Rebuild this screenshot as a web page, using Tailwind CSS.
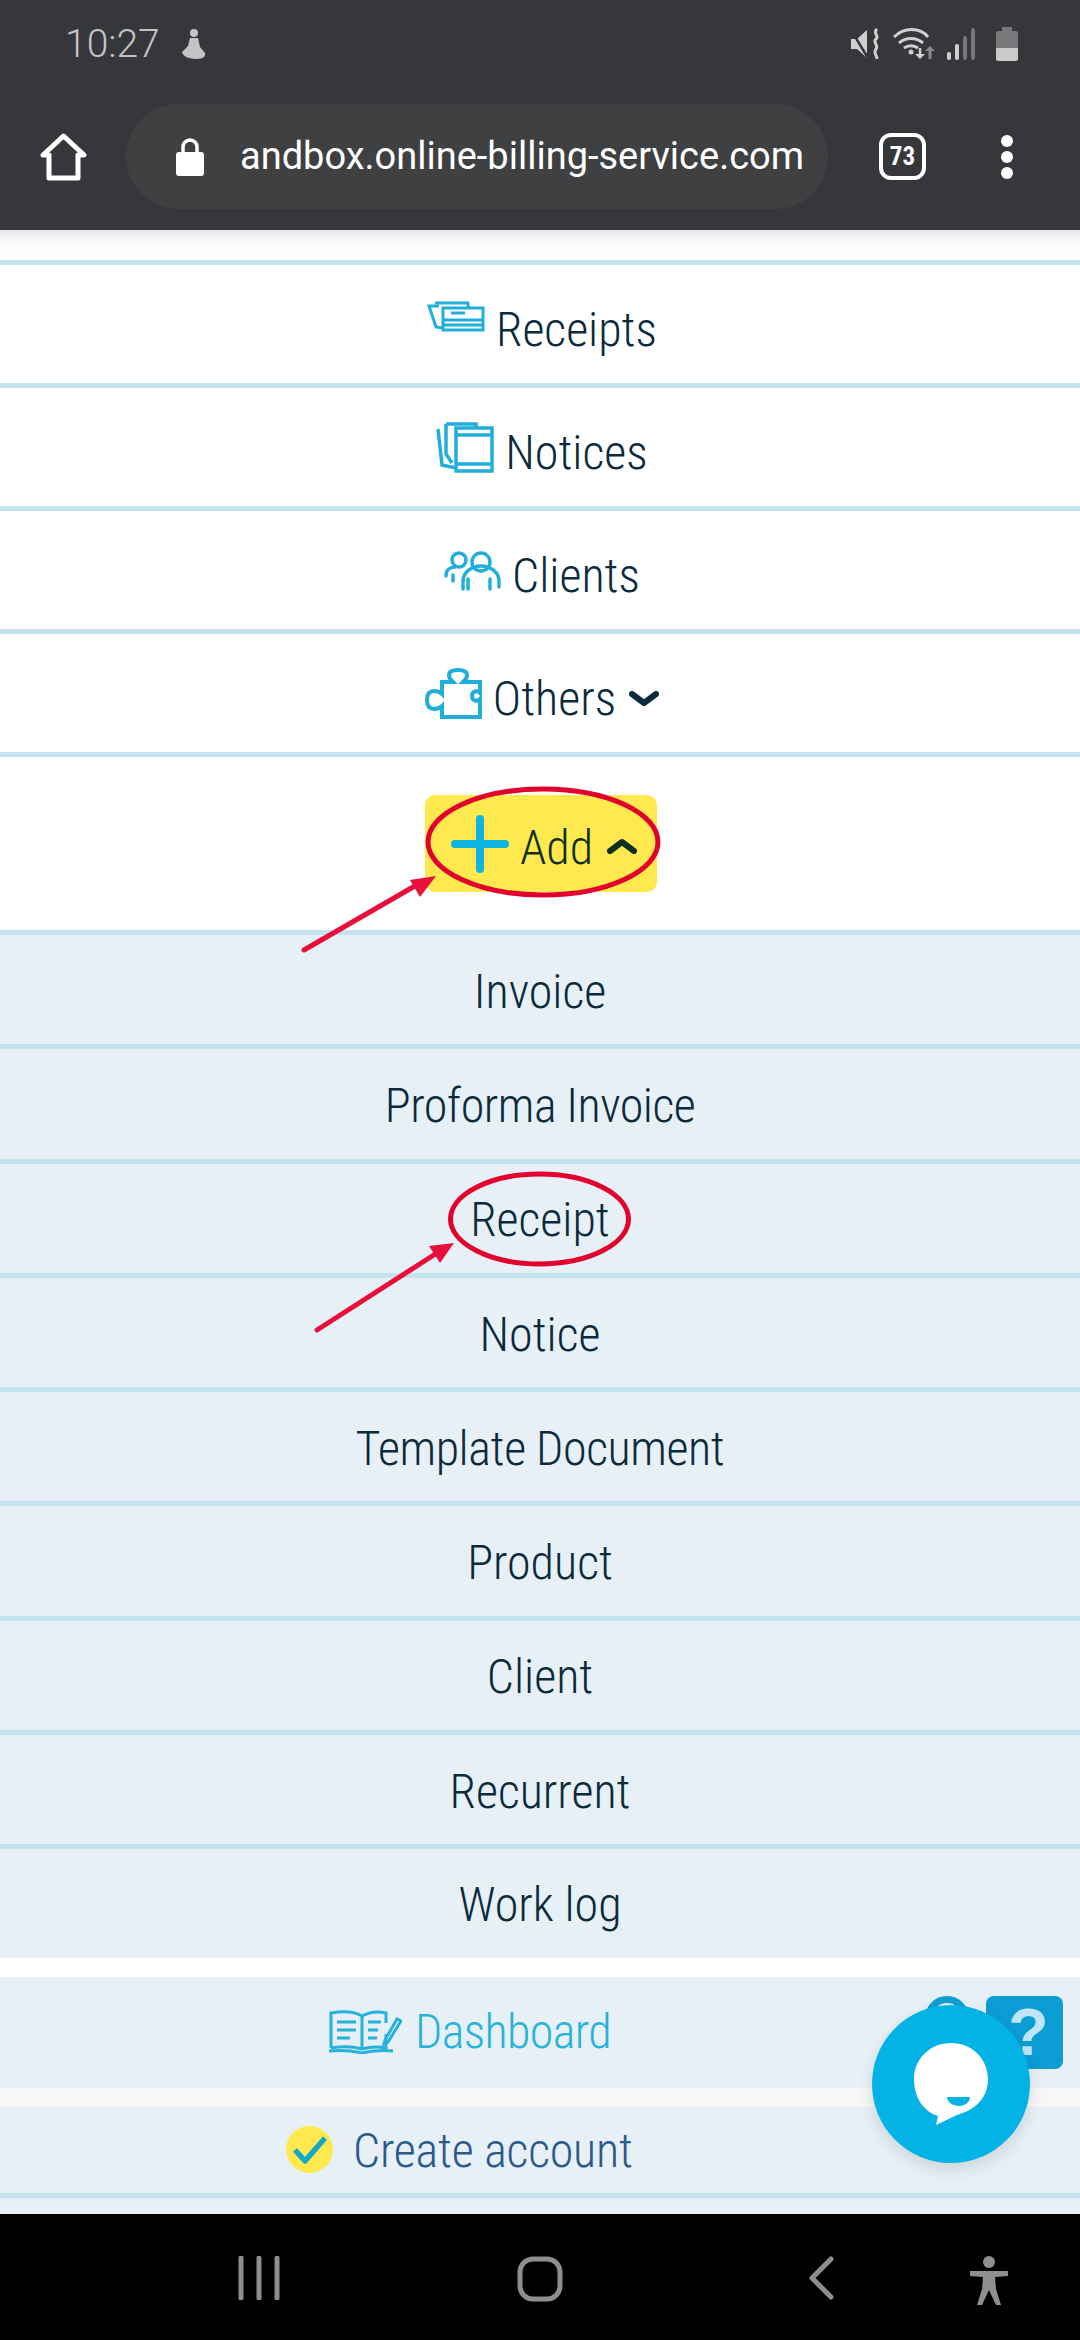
<!DOCTYPE html>
<html lang="en">
<head>
  <meta charset="UTF-8" />
  <meta name="viewport" content="width=device-width, initial-scale=1.0" />
  <title>Menu</title>
  <script src="https://cdn.jsdelivr.net/npm/@tailwindcss/browser@4"></script>
</head>
<body class="bg-white font-['Roboto',sans-serif]">
  <div class="relative w-[1080px] h-[2340px] overflow-hidden flex flex-col font-['Roboto',sans-serif] font-light [font-stretch:75%] text-[48px] text-[#0b2a3b]">

    <!-- Status bar + browser toolbar -->
    <header class="h-[230px] shrink-0 bg-[#36373a] flex flex-col font-normal [font-stretch:100%]">
      <div class="h-[88px] pl-[65px] pr-[62px] flex items-center justify-between">
        <div class="flex items-center gap-[19px] text-[#c4c4c4] text-[39px] font-light [font-stretch:88%]">
          <span>10:27</span>
          <svg width="28" height="32" viewBox="0 0 28 32" fill="#c4c4c4"><circle cx="15" cy="5" r="4"/><path d="M11 10h8l2 9 5 6c1 3-2 6-8 6-7 0-14-2-15-7l6-6z"/></svg>
        </div>
        <div class="flex items-center">
          <svg width="32" height="32" viewBox="0 0 32 32" fill="none"><path d="M1 11h6L17 2v28L7 21H1z" fill="#cfcfcf"/><path d="M1 2l17 28" stroke="#36373a" stroke-width="2.5"/><path d="M27 1c-5 4 3 7-1 10s3 6 0 10 1 6 1 10" stroke="#cfcfcf" stroke-width="3"/></svg>
          <svg width="42" height="32" viewBox="0 0 42 32" fill="none" stroke="#cfcfcf" stroke-width="3" class="ml-[11px]"><path d="M1 9c10-10 26-10 34 0M6 15c7-6 17-6 24 0M11 20c4-3 10-3 14 0"/><circle cx="18" cy="24" r="2.5" fill="#cfcfcf" stroke="none"/><path d="M27 20v8" stroke-width="2.5"/><path d="M22 26l5 5 5-5z" fill="#cfcfcf" stroke="none"/><path d="M37 31V21" stroke="#8a8a8a" stroke-width="3"/><path d="M32 23l5-5 5 5z" fill="#8a8a8a" stroke="none"/></svg>
          <svg width="28" height="32" viewBox="0 0 28 32" fill="none" stroke-width="4" stroke-linecap="round" class="ml-[12px]"><path d="M2 30v-4" stroke="#cfcfcf"/><path d="M10 30V18" stroke="#cfcfcf"/><path d="M18 30V10" stroke="#77787a"/><path d="M26 30V2" stroke="#77787a"/></svg>
          <svg width="22" height="34" viewBox="0 0 22 34" class="ml-[21px]"><path d="M6 0h10v4h4a2 2 0 012 2v15H0V6a2 2 0 012-2h4z" fill="#77787a"/><path d="M0 21h22v11a2 2 0 01-2 2H2a2 2 0 01-2-2z" fill="#cacaca"/></svg>
        </div>
      </div>
      <div class="flex items-center pt-[16px] pl-[40px]">
        <svg width="47" height="48" viewBox="0 0 47 48" fill="none" stroke="#fff" stroke-width="5" stroke-linejoin="round"><path d="M3 22L23.5 3 44 22h-6v23H9V22z"/></svg>
        <div class="ml-[39px] w-[702px] h-[105px] rounded-full bg-[#3e4042] flex items-center pl-[49px]">
          <svg width="30" height="38" viewBox="0 0 30 38" fill="none"><path d="M8 16V9a7 7 0 0114 0v7" stroke="#fff" stroke-width="3.5"/><rect x="1" y="14" width="28" height="24" rx="3" fill="#fff"/></svg>
          <span class="ml-[35px] text-[38px] text-white">andbox.online-billing-service.com</span>
        </div>
        <div class="ml-[51px] w-[47px] h-[47px] rounded-[12px] border-[4px] border-white flex items-center justify-center text-white text-[25px] font-bold [font-stretch:75%]">73</div>
        <div class="ml-[75px] flex flex-col gap-[4px]">
          <span class="block w-[12px] h-[12px] rounded-full bg-white"></span>
          <span class="block w-[12px] h-[12px] rounded-full bg-white"></span>
          <span class="block w-[12px] h-[12px] rounded-full bg-white"></span>
        </div>
      </div>
    </header>

    <!-- Page -->
    <main class="flex-1 flex flex-col">
      <div class="h-[30px] shrink-0 bg-gradient-to-b from-[#e8e8e8] via-[#fbfbfb] to-white"></div>
      <div class="h-[5px] shrink-0 bg-[#c5e3ef]"></div>

      <a class="h-[123px] shrink-0 border-b-[5px] border-[#c5e3ef] flex items-center justify-center pl-[4px]">
        <svg width="58" height="32" viewBox="0 0 58 32" fill="none" stroke="#22aedb" stroke-width="3" class="mr-[11px] mb-[16px]"><path d="M16 28L9 27 2 6h10"/><path d="M8 3h33v5"/><rect x="16" y="8" width="40" height="22"/><path d="M16 20h40M16 25h40M24 13h14"/></svg>
        <span class="pt-[12px]">Receipts</span>
      </a>
      <a class="h-[123px] shrink-0 border-b-[5px] border-[#c5e3ef] flex items-center justify-center pl-[4px]">
        <svg width="58" height="52" viewBox="0 0 58 52" fill="none" stroke="#22aedb" stroke-width="3.5" class="mr-[11px]"><path d="M2 8l4 36 14 3"/><path d="M10 3v30l6 9"/><path d="M10 3h30v4"/><rect x="20" y="7" width="36" height="43"/><path d="M20 14h36M20 43h36"/></svg>
        <span class="pt-[12px]">Notices</span>
      </a>
      <a class="h-[123px] shrink-0 border-b-[5px] border-[#c5e3ef] flex items-center justify-center pl-[4px]">
        <svg width="57" height="40" viewBox="0 0 57 40" fill="none" stroke="#22aedb" stroke-width="3.5" stroke-linecap="round" class="mr-[11px] mt-[2px]"><circle cx="15" cy="9" r="7"/><circle cx="37" cy="11" r="9"/><path d="M2 25c0-6 4-9 9-9M9 24v6M19 30a18 15 0 0136 0v6M24 28v10M46 28v10M19 30v8"/></svg>
        <span class="pt-[12px]">Clients</span>
      </a>
      <a class="h-[123px] shrink-0 border-b-[5px] border-[#c5e3ef] flex items-center justify-center pl-[4px]">
        <svg width="57" height="52" viewBox="0 0 57 52" fill="none" stroke="#22aedb" stroke-width="4" class="mr-[11px] mt-[2px]"><path d="M17 14h11c-3-3-4-4-4-7 0-3 3-5 9-5s9 2 9 5c0 3-1 4-4 7h17v11c-3-3-8-2-8 3s5 6 8 3v18H17V38c-2 2-4 3-8 3-5 0-7-4-7-9s2-9 7-9c4 0 6 1 8 3z"/></svg>
        <span class="pt-[12px]">Others</span>
        <svg width="30" height="16" viewBox="0 0 30 16" fill="none" stroke="#0b2a3b" stroke-width="6" stroke-linecap="round" stroke-linejoin="round" class="ml-[13px] mt-[12px]"><path d="M3 3l12 9 12-9"/></svg>
      </a>

      <div class="h-[178px] shrink-0 border-b-[5px] border-[#c5e3ef] flex items-start justify-center pt-[38px] pl-[2px]">
        <a class="w-[232px] h-[97px] rounded-[10px] bg-[#ffe94f] flex items-center pl-[26px] text-[#10301f]">
          <svg width="58" height="58" viewBox="0 0 58 58" fill="none" stroke="#0fb3e0" stroke-width="8" stroke-linecap="round"><path d="M29 4v50M4 29h50"/></svg>
          <span class="ml-[11px] pt-[9px]">Add</span>
          <svg width="30" height="16" viewBox="0 0 30 16" fill="none" stroke="#10301f" stroke-width="6" stroke-linecap="round" stroke-linejoin="round" class="ml-[14px] mt-[4px]"><path d="M3 13l12-9 12 9"/></svg>
        </a>
      </div>

      <!-- Add submenu -->
      <ul class="bg-[#e6f0f6]">
        <li class="h-[114.3px] border-b-[5px] border-[#c5e3ef] flex items-center justify-center pt-[4px]">Invoice</li>
        <li class="h-[114.3px] border-b-[5px] border-[#c5e3ef] flex items-center justify-center pt-[4px] tracking-[-0.5px]">Proforma Invoice</li>
        <li class="h-[114.3px] border-b-[5px] border-[#c5e3ef] flex items-center justify-center pt-[4px]">Receipt</li>
        <li class="h-[114.3px] border-b-[5px] border-[#c5e3ef] flex items-center justify-center pt-[4px]">Notice</li>
        <li class="h-[114.3px] border-b-[5px] border-[#c5e3ef] flex items-center justify-center pt-[4px] tracking-[-0.4px]">Template Document</li>
        <li class="h-[114.3px] border-b-[5px] border-[#c5e3ef] flex items-center justify-center pt-[4px]">Product</li>
        <li class="h-[114.3px] border-b-[5px] border-[#c5e3ef] flex items-center justify-center pt-[4px]">Client</li>
        <li class="h-[114.3px] border-b-[5px] border-[#c5e3ef] flex items-center justify-center pt-[4px]">Recurrent</li>
        <li class="h-[108.6px] flex items-center justify-center pt-[2px]">Work log</li>
      </ul>

      <div class="h-[19px] shrink-0 bg-white"></div>
      <a class="h-[111px] shrink-0 bg-[#e6f0f6] flex items-center pl-[328px] text-[#27b2dc]">
        <svg width="74" height="44" viewBox="0 0 74 44" fill="none" stroke="#27b2dc" stroke-width="3"><path d="M3 38V3c12-2 24-1 31 3 7-4 16-5 24-3v10"/><path d="M34 6v33M3 38c12-2 24-1 31 1 7-2 14-3 24-1V24"/><path d="M1 41c12-1 24 0 33 2 9-2 20-3 31-2"/><path d="M9 12h19M9 20h19M9 28h13M40 12h13M40 20h10M40 28h9"/><path d="M57 30l12-21 4 2-13 21-4 2z"/></svg>
        <span class="ml-[13px] tracking-[-0.6px]">Dashboard</span>
      </a>
      <div class="h-[19px] shrink-0 bg-[#f7f7f7]"></div>
      <a class="h-[91px] shrink-0 bg-[#e6f0f6] border-b-[5px] border-[#c5e3ef] flex items-center pl-[286px] text-[#2a5a8c]">
        <span class="w-[47px] h-[47px] rounded-full bg-[#ffe94f] flex items-center justify-center">
          <svg width="36" height="30" viewBox="0 0 36 30" fill="none" stroke="#14a9c9" stroke-width="5.5" stroke-linejoin="round"><path d="M3 15l10 11L33 3"/></svg>
        </span>
        <span class="ml-[20px] pt-[2px] tracking-[-0.2px]">Create account</span>
      </a>
      <div class="flex-1 bg-[#e6f0f6]"></div>
    </main>

    <!-- Android nav bar -->
    <nav class="h-[126px] shrink-0 bg-black flex items-start pt-[42px] pl-[237px]">
      <svg width="44" height="44" viewBox="0 0 44 44" fill="none" stroke="#8e8e8e" stroke-width="5" stroke-linecap="round"><path d="M4 2v40M22 2v40M40 2v40"/></svg>
      <svg width="46" height="46" viewBox="0 0 46 46" fill="none" stroke="#8e8e8e" stroke-width="5" class="ml-[236px]"><rect x="3" y="3" width="40" height="40" rx="13"/></svg>
      <svg width="26" height="44" viewBox="0 0 26 44" fill="none" stroke="#8e8e8e" stroke-width="5" stroke-linecap="round" stroke-linejoin="round" class="ml-[245px]"><path d="M23 3L4 22l19 19"/></svg>
      <svg width="40" height="50" viewBox="0 0 40 50" fill="#8e8e8e" class="ml-[135px]"><circle cx="20" cy="6" r="6"/><path d="M1 15h38v5l-13 1 1 12 5 16h-5l-7-15-7 15H8l5-16 1-12-13-1z"/></svg>
    </nav>

    <!-- Help + chat buttons over the page -->
    <div class="absolute left-[925px] top-[1996px] w-[44px] h-[44px] rounded-full border-[7px] border-[#0d9fd4]"></div>
    <div class="absolute left-[986px] top-[1996px] w-[77px] h-[73px] rounded-[8px] bg-[#0b9dd3] flex items-start justify-center pl-[8px] text-[#bfe6f8] text-[66px] leading-[72px] font-bold font-['Liberation_Sans',sans-serif]">?</div>
    <div class="absolute left-[872px] top-[2005px] w-[158px] h-[158px] rounded-full bg-[#03b3e6] shadow-[0_6px_16px_rgba(0,0,0,0.12)] flex items-center justify-center">
      <svg width="76" height="84" viewBox="0 0 76 84"><path d="M38 1c21 0 37 16 37 36 0 19-13 31-31 36L23 83l2-9C10 69 1 55 1 37 1 17 17 1 38 1z" fill="#fff"/><path d="M34 55h23c0 5-5 9-11 9s-12-4-12-9z" fill="#03b3e6"/></svg>
    </div>

    <!-- Red annotations drawn on the screenshot -->
    <svg class="absolute inset-0 pointer-events-none" width="1080" height="2340" viewBox="0 0 1080 2340" fill="none">
      <ellipse cx="543" cy="842" rx="115" ry="53" stroke="#e2002d" stroke-width="5"/>
      <path d="M304 950L420 883" stroke="#e8103a" stroke-width="5" stroke-linecap="round"/>
      <path d="M436 876L410 880L420 897z" fill="#e8103a"/>
      <ellipse cx="539.5" cy="1219" rx="89" ry="45" stroke="#e2002d" stroke-width="5"/>
      <path d="M317 1330L440 1251" stroke="#e8103a" stroke-width="5" stroke-linecap="round"/>
      <path d="M454 1243L429 1246L440 1263z" fill="#e8103a"/>
    </svg>
  </div>
</body>
</html>
